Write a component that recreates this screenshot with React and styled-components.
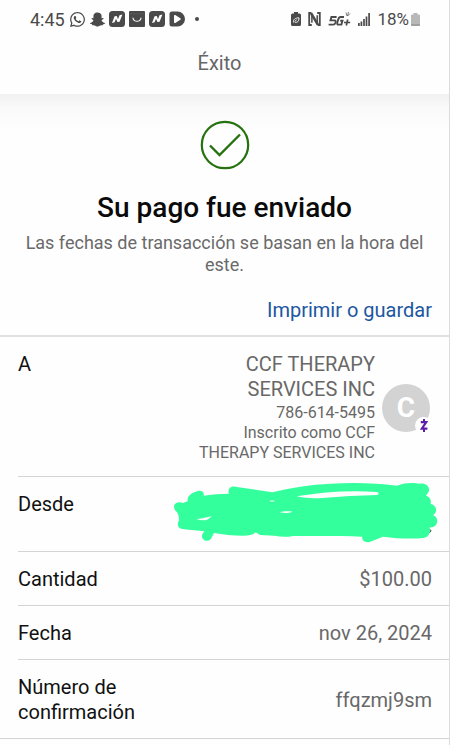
import React from "react";
import styled, { createGlobalStyle } from "styled-components";
import { FaSnapchatGhost, FaWhatsapp } from "react-icons/fa";

const GlobalStyle = createGlobalStyle`
  * {
    box-sizing: border-box;
  }

  body {
    margin: 0;
    background: #fefefe;
    color: #111;
    font-family: Roboto, "Liberation Sans", sans-serif;
  }
`;

const Page = styled.div`
  min-height: 100vh;
  border-right: 1px solid #dcdcdc;
`;

const StatusBar = styled.div`
  display: flex;
  align-items: center;
  justify-content: space-between;
  height: 38px;
  padding: 0 29px 0 30px;
  color: #4a4a4a;
  font-size: 17px;
`;

const StatusGroup = styled.div`
  display: flex;
  align-items: center;
  gap: ${({ $gap }) => $gap}px;

  svg {
    display: block;
  }
`;

const Time = styled.span`
  font-size: 18px;
`;

const BatteryLevel = styled.span`
  display: flex;
  align-items: center;
  gap: 2px;
`;

const AppBar = styled.header`
  display: flex;
  align-items: center;
  justify-content: center;
  height: 56px;
  padding: 0 28px 6px 18px;
  color: #666;
  font-size: 20px;
`;

const Summary = styled.section`
  padding: 26px 17px 12px;
  border-bottom: 2px solid #e0e0e0;
  background: linear-gradient(#f1f1f1, #fafafa 14px, #fefefe 38px);
  text-align: center;

  svg {
    display: block;
    margin: 0 auto;
  }
`;

const Title = styled.h1`
  margin: 21px 0 7px;
  color: #0a0a0a;
  font-size: 28px;
  font-weight: 500;
  line-height: 34px;
`;

const Note = styled.p`
  margin: 0 0 22px;
  color: #6a6a6a;
  font-size: 18px;
  line-height: 22px;
`;

const PrintLink = styled.a`
  display: block;
  color: #1c57a0;
  font-size: 20px;
  line-height: 25px;
  text-align: right;
  text-decoration: none;
`;

const Details = styled.dl`
  margin: 0;
  border-bottom: 1px solid #d4d4d4;
`;

const Row = styled.div`
  display: flex;
  align-items: ${({ $align }) => $align || "center"};
  justify-content: space-between;
  min-height: ${({ $tall }) => ($tall ? 75 : 54)}px;
  margin-left: 18px;
  padding: 15px 17px 13px 0;
  border-bottom: 1px solid #d4d4d4;
  font-size: 20px;
  line-height: 25px;

  &:last-child {
    border-bottom: 0;
  }
`;

const Label = styled.dt`
  max-width: 160px;
`;

const Value = styled.dd`
  position: relative;
  margin: 0;
  color: #686868;
  text-align: right;
`;

const Payee = styled.div`
  display: flex;
  align-items: center;
  gap: 7px;
  padding-right: 2px;
`;

const PayeeText = styled.div`
  width: 180px;
`;

const PayeeName = styled.div`
  margin-bottom: 1px;
  padding-left: 30px;
`;

const PayeeInfo = styled.div`
  font-size: 16px;
  line-height: 20px;
`;

const Avatar = styled.div`
  position: relative;
  display: flex;
  align-items: center;
  justify-content: center;
  width: 48px;
  height: 48px;
  border-radius: 50%;
  background: #d3d3d3;
  color: #fff;
  font-size: 28px;
  font-weight: 700;
`;

const Badge = styled.span`
  position: absolute;
  right: -2px;
  bottom: -2px;
  display: flex;
  align-items: center;
  justify-content: center;
  width: 17px;
  height: 17px;
  border-radius: 50%;
  background: #fefefe;
`;

const Marker = styled.svg`
  position: absolute;
  top: -12px;
  right: -8px;
`;

function NewsIcon() {
  return (
    <svg width="16" height="16" viewBox="0 0 16 16">
      <rect width="16" height="16" rx="3.5" fill="#4a4a4a" />
      <path d="M3 12 5.6 5.2 7.8 5 9 8.2 10.5 4.2 13.4 3.6 10.6 10.8 8.4 11 7 7.8 5.6 11.2Z" fill="#fff" />
    </svg>
  );
}

function BagIcon() {
  return (
    <svg width="16" height="16" viewBox="0 0 16 16">
      <rect width="16" height="16" rx="1" fill="#4a4a4a" />
      <path d="M0 2.800h16" stroke="#666" strokeWidth=".5" />
      <path d="M4 7c.6 4.400 7.400 4.400 8 0" fill="none" stroke="#fff" strokeWidth="1.100" strokeLinecap="round" />
    </svg>
  );
}

function PlayIcon() {
  return (
    <svg width="16" height="16" viewBox="0 0 16 16">
      <path d="M3 .5h5.500a7.300 7.300 0 0 1 0 15H3A2.500 2.500 0 0 1 .5 13V3A2.500 2.500 0 0 1 3 .5Z" fill="#4a4a4a" />
      <path d="M5 4.800v6.400c0 .8.6 1.100 1.300.7l5-3.100c.6-.4.6-1.200 0-1.600l-5-3.100C5.600 3.700 5 4 5 4.800Z" fill="#fff" />
    </svg>
  );
}

function SaverIcon() {
  return (
    <svg width="10" height="14" viewBox="0 0 10 14">
      <path d="M3 0h4v1.500h1.500A1.500 1.500 0 0 1 10 3v9.500A1.500 1.500 0 0 1 8.500 14h-7A1.500 1.500 0 0 1 0 12.500V3a1.500 1.500 0 0 1 1.500-1.500H3Z" fill="#4a4a4a" />
      <path d="M2.500 10.500c-.5-3 1.500-4.500 5.500-4.700 0 3.500-1.500 5-4.200 4.500M3.500 9.500l2.200-1.700" fill="none" stroke="#fff" strokeWidth=".9" />
    </svg>
  );
}

function NfcIcon() {
  return (
    <svg width="13" height="14" viewBox="0 0 13 14" fill="none" stroke="#4a4a4a">
      <path d="M3.800 13H1.200V1h2.200M9.200 1h2.600v12H9.600" strokeWidth="1.800" />
      <path d="M3.900 10.800V3M9.200 3.200V11" strokeWidth="1.500" />
      <path d="m3 1.200 7 11.600" strokeWidth="2.600" />
    </svg>
  );
}

function NetworkIcon() {
  return (
    <svg width="23" height="17" viewBox="0 0 23 17" fill="none" stroke="#4a4a4a">
      <path d="M8.600 6H3.400L2.500 9.400h4c1.400 0 1.300 1.100.9 2.300-.4 1.100-1 1.900-2.200 1.900H.6" strokeWidth="1.900" />
      <path d="M16 6h-3.300c-1.600 0-2.100 1-2.600 2.800l-.8 2.800c-.3 1.400.1 2 1.300 2h2.800l1.100-3.800h-2.300" strokeWidth="1.900" />
      <path d="M16 11.500h6.200M19.700 8.500l-1.400 6" strokeWidth="1.700" />
      <path d="m18 1.500 1 3.500M20.500 1l-1 4 2.500-2.500" strokeWidth=".7" />
    </svg>
  );
}

function SignalIcon() {
  return (
    <svg width="12" height="13" viewBox="0 0 12 13" stroke="#4a4a4a" strokeWidth="1.700">
      <path d="M.9 13v-3M3.400 13V8.500M6 13V6M8.500 13V3.500M11.100 13V0" />
    </svg>
  );
}

function BatteryIcon() {
  return (
    <svg width="9" height="13" viewBox="0 0 9 13">
      <path d="M2.500 0h4v1.500H8a1 1 0 0 1 1 1V12a1 1 0 0 1-1 1H1a1 1 0 0 1-1-1V2.500a1 1 0 0 1 1-1h1.500Z" fill="#b8b8b8" />
      <path d="M0 11h9v1a1 1 0 0 1-1 1H1a1 1 0 0 1-1-1Z" fill="#a0a0a0" />
    </svg>
  );
}

function SuccessIcon() {
  return (
    <svg width="50" height="50" viewBox="0 0 50 50" fill="none" stroke="#26720f" strokeWidth="2.200">
      <circle cx="25" cy="25" r="23.200" />
      <path d="M10 25.500 19.500 35 40 14.500" strokeWidth="2.400" />
    </svg>
  );
}

function ZelleIcon() {
  return (
    <svg width="8" height="13" viewBox="0 0 8 13" fill="none" stroke="#5b1fa8">
      <path d="M.8 3.200h5.400L1.800 9.700h5.600" strokeWidth="2.200" />
      <path d="M4 0v3M4 10v3" strokeWidth="2" />
    </svg>
  );
}

// Hides the account the payment was made from
function Scribble() {
  return (
    <Marker width="270" height="65" viewBox="30 30 810 195" aria-hidden="true">
      <path d="M803 182c6-5 11-3 9 2-1 3-4 5-7 3" fill="none" stroke="#333" strokeWidth="3" />
      <path
        fill="#33ff9c"
        fillRule="evenodd"
        d="M42 109C43 98 57 94 68 99L83 94C81 76 96 67 116 62C129 61 133 69 131 77C154 73 181 71 207 71C202 57 211 48 226 50L337 67C390 53 451 44 512 41C580 37 650 39 711 47C735 37 764 38 778 41C798 39 809 49 807 63C804 70 800 74 798 77C811 81 814 91 812 102C826 105 833 119 825 130L819 136C832 139 835 155 828 165C823 171 815 172 809 172C813 187 806 202 791 204C753 208 709 205 669 200L631 215C617 220 604 212 607 200C535 197 466 198 399 198C379 202 361 201 344 197L300 195L287 187C279 195 266 197 250 197C218 197 188 194 162 189L154 205C148 217 128 214 126 200C125 193 131 187 134 184L72 178C53 177 50 164 57 151L56 139C54 128 49 124 44 119Z
        M410 79C440 86 462 85 488 84C540 80 602 76 650 75C658 73 657 67 650 66C570 60 490 66 410 79Z
        M108 147C124 152 137 152 144 148L156 138C144 141 132 145 108 147Z
        M360 127C373 131 388 129 398 125C383 123 370 123 360 127Z
        M328 93C334 96 340 95 345 93C339 91 333 91 328 93Z"
      />
    </Marker>
  );
}

function App() {
  return (
    <>
      <GlobalStyle />
      <Page>
        <StatusBar>
          <StatusGroup $gap={4}>
            <Time>4:45</Time>
            <FaWhatsapp size={17} />
            <FaSnapchatGhost size={15} />
            <NewsIcon />
            <BagIcon />
            <NewsIcon />
            <PlayIcon />
            <svg width="20" height="6" viewBox="0 0 20 6">
              <circle cx="8" cy="3" r="2" fill="#4a4a4a" />
            </svg>
          </StatusGroup>
          <StatusGroup $gap={7}>
            <SaverIcon />
            <NfcIcon />
            <NetworkIcon />
            <SignalIcon />
            <BatteryLevel>
              18%
              <BatteryIcon />
            </BatteryLevel>
          </StatusGroup>
        </StatusBar>

        <AppBar>Éxito</AppBar>

        <main>
          <Summary>
            <SuccessIcon />
            <Title>Su pago fue enviado</Title>
            <Note>Las fechas de transacción se basan en la hora del este.</Note>
            <PrintLink href="#imprimir">Imprimir o guardar</PrintLink>
          </Summary>

          <Details>
            <Row $align="flex-start">
              <Label>A</Label>
              <Value>
                <Payee>
                  <PayeeText>
                    <PayeeName>CCF THERAPY SERVICES INC</PayeeName>
                    <PayeeInfo>786-614-5495</PayeeInfo>
                    <PayeeInfo>Inscrito como CCF THERAPY SERVICES INC</PayeeInfo>
                  </PayeeText>
                  <Avatar>
                    C
                    <Badge>
                      <ZelleIcon />
                    </Badge>
                  </Avatar>
                </Payee>
              </Value>
            </Row>
            <Row $align="flex-start" $tall>
              <Label>Desde</Label>
              <Value>
                <Scribble />
              </Value>
            </Row>
            <Row>
              <Label>Cantidad</Label>
              <Value>$100.00</Value>
            </Row>
            <Row>
              <Label>Fecha</Label>
              <Value>nov 26, 2024</Value>
            </Row>
            <Row>
              <Label>Número de confirmación</Label>
              <Value>ffqzmj9sm</Value>
            </Row>
          </Details>
        </main>
      </Page>
    </>
  );
}

export default App;
